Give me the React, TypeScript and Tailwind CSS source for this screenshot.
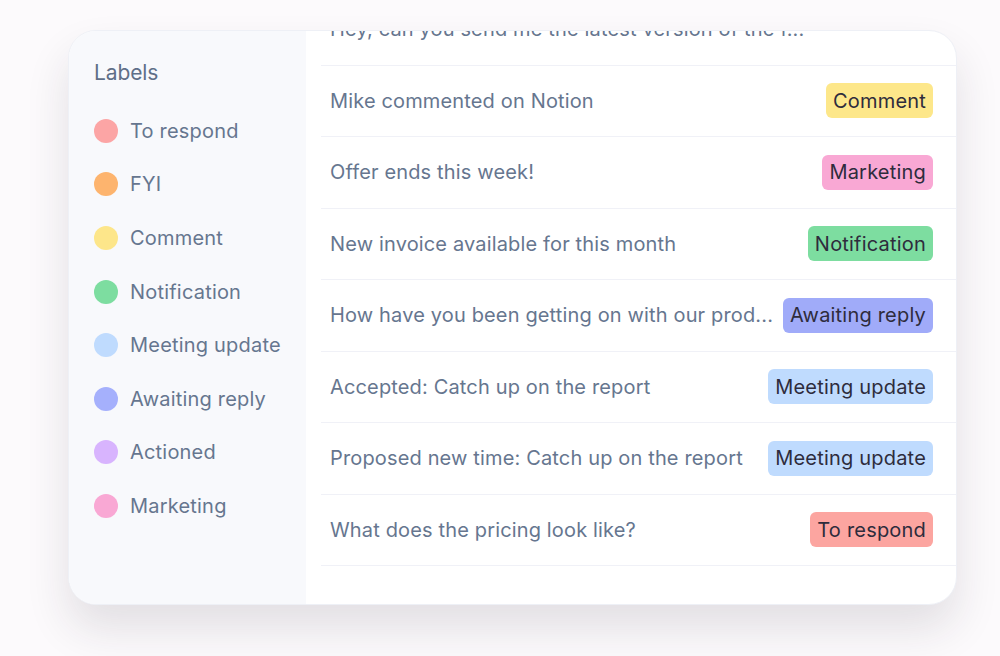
import React from "react";

const labels = [
  { name: "To respond", color: "bg-[#fca5a5]" },
  { name: "FYI", color: "bg-[#fdb46e]" },
  { name: "Comment", color: "bg-[#fde68a]" },
  { name: "Notification", color: "bg-[#7ddda0]" },
  { name: "Meeting update", color: "bg-[#bfdbfe]" },
  { name: "Awaiting reply", color: "bg-[#a5b0fc]" },
  { name: "Actioned", color: "bg-[#d8b4fe]" },
  { name: "Marketing", color: "bg-[#f9a8d4]" },
];

const rows = [
  { text: "Hey, can you send me the latest version of the f...", tag: null as null | { name: string; color: string } },
  { text: "Mike commented on Notion", tag: { name: "Comment", color: "bg-[#fde78a]" } },
  { text: "Offer ends this week!", tag: { name: "Marketing", color: "bg-[#f9a8d4]" } },
  { text: "New invoice available for this month", tag: { name: "Notification", color: "bg-[#7ddda0]" } },
  { text: "How have you been getting on with our prod...", tag: { name: "Awaiting reply", color: "bg-[#a0abf9]" } },
  { text: "Accepted: Catch up on the report", tag: { name: "Meeting update", color: "bg-[#bfdbfe]" } },
  { text: "Proposed new time: Catch up on the report", tag: { name: "Meeting update", color: "bg-[#bfdbfe]" } },
  { text: "What does the pricing look like?", tag: { name: "To respond", color: "bg-[#fca5a0]" } },
];

export default function App() {
  return (
    <div
      className="w-[1000px] h-[656px] overflow-hidden bg-[#fcfafc] pl-[68px] pt-[30px]"
      style={{ fontFamily: "Inter, 'Noto Sans', sans-serif" }}
    >
      <div className="flex w-[889px] h-[575px] rounded-[28px] overflow-hidden bg-white border border-[#eef0f6] shadow-[0_24px_44px_rgba(40,30,50,0.12)]">
        <div className="w-[237px] shrink-0 bg-[#f8f9fc] pl-[25px] pt-[28px]">
          <div className="text-[21px] leading-[28px] text-[#5f6f88] tracking-[-0.1px]">Labels</div>
          <div className="mt-[17px] flex flex-col">
            {labels.map((l) => (
              <div key={l.name} className="flex items-center h-[53.6px] gap-[12px]">
                <span className={`w-[24px] h-[24px] rounded-full ${l.color}`} />
                <span className="text-[20px] text-[#66768f] tracking-[0.2px]">{l.name}</span>
              </div>
            ))}
          </div>
        </div>
        <div className="flex-1 overflow-hidden pl-[15px]">
          <div className="mt-[-37px] flex flex-col">
            {rows.map((r, i) => (
              <div
                key={i}
                className="flex items-center justify-between h-[71.5px] border-b border-[#f0f1f7] pl-[9px] pr-[23px]"
              >
                <span className="text-[20px] text-[#66768f] tracking-[0.15px] whitespace-nowrap">{r.text}</span>
                {r.tag && (
                  <span
                    className={`${r.tag.color} rounded-[6px] h-[35px] px-[7px] flex items-center text-[20px] text-[#2e2c3c] tracking-[0.2px] whitespace-nowrap`}
                  >
                    {r.tag.name}
                  </span>
                )}
              </div>
            ))}
          </div>
        </div>
      </div>
    </div>
  );
}
